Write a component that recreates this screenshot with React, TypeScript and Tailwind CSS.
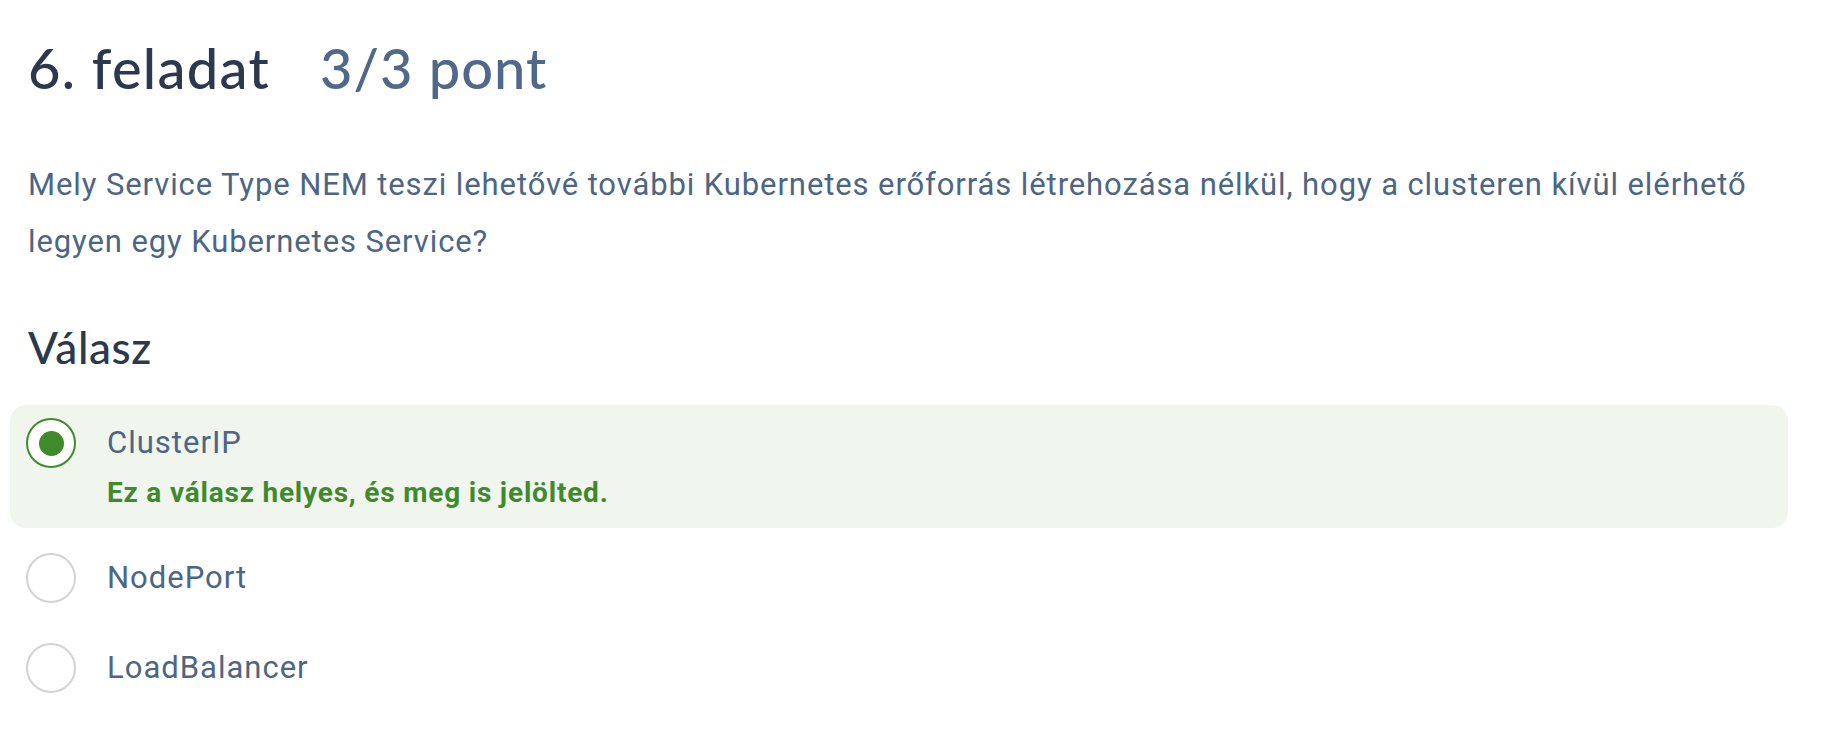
import React from "react";

const options = [
  { label: "ClusterIP", selected: true, note: "Ez a válasz helyes, és meg is jelölted." },
  { label: "NodePort", selected: false },
  { label: "LoadBalancer", selected: false },
];

function Radio({ selected }: { selected: boolean }) {
  if (selected) {
    return (
      <div className="flex h-[50px] w-[50px] shrink-0 items-center justify-center rounded-full border-2 border-[#3f8a2b] bg-white">
        <div className="h-[25px] w-[25px] rounded-full bg-[#3f8a2b]" />
      </div>
    );
  }
  return <div className="h-[50px] w-[50px] shrink-0 rounded-full border-2 border-[#d3d3d3] bg-white" />;
}

export default function App() {
  return (
    <div className="min-h-[730px] w-full bg-white pl-[10px] pr-[38px] pt-[40px]">
      <h1
        className="flex items-baseline pl-[18px] text-[56px] leading-[56px] font-medium tracking-[1.3px]"
        style={{ fontFamily: "Lato, 'Noto Sans', sans-serif" }}
      >
        <span className="text-[#2c394d]">6. feladat</span>
        <span className="ml-[50px] text-[#50698a] tracking-[1px]">3/3 pont</span>
      </h1>

      <p
        className="mt-[60px] pl-[18px] text-[31px] leading-[57px] tracking-[0.9px] text-[#4c6684]"
        style={{ fontFamily: "Roboto, 'Liberation Sans', sans-serif" }}
      >
        Mely Service Type NEM teszi lehetővé további Kubernetes erőforrás létrehozása nélkül, hogy a clusteren kívül
        elérhető legyen egy Kubernetes Service?
      </p>

      <h2
        className="mt-[55px] pl-[18px] text-[44px] leading-[44px] font-medium tracking-[0.6px] text-[#2c394d]"
        style={{ fontFamily: "Lato, 'Noto Sans', sans-serif" }}
      >
        Válasz
      </h2>

      <div className="mt-[36px] flex flex-col" style={{ fontFamily: "Roboto, 'Liberation Sans', sans-serif" }}>
        <div className="flex gap-[31px] rounded-[16px] bg-[#f0f5ee] pl-[16px] pt-[13px] pb-[15px]">
          <Radio selected={true} />
          <div className="flex flex-col">
            <span className="text-[31px] leading-[50px] tracking-[1px] text-[#4c6684]">{options[0].label}</span>
            <span className="mt-[5px] text-[28px] leading-[40px] font-bold tracking-[0.8px] text-[#3f8a2b]">
              {options[0].note}
            </span>
          </div>
        </div>
        <div className="mt-[25px] flex gap-[31px] pl-[16px]">
          <Radio selected={false} />
          <span className="text-[31px] leading-[50px] tracking-[1px] text-[#4c6684]">{options[1].label}</span>
        </div>
        <div className="mt-[40px] flex gap-[31px] pl-[16px]">
          <Radio selected={false} />
          <span className="text-[31px] leading-[50px] tracking-[1px] text-[#4c6684]">{options[2].label}</span>
        </div>
      </div>
    </div>
  );
}
